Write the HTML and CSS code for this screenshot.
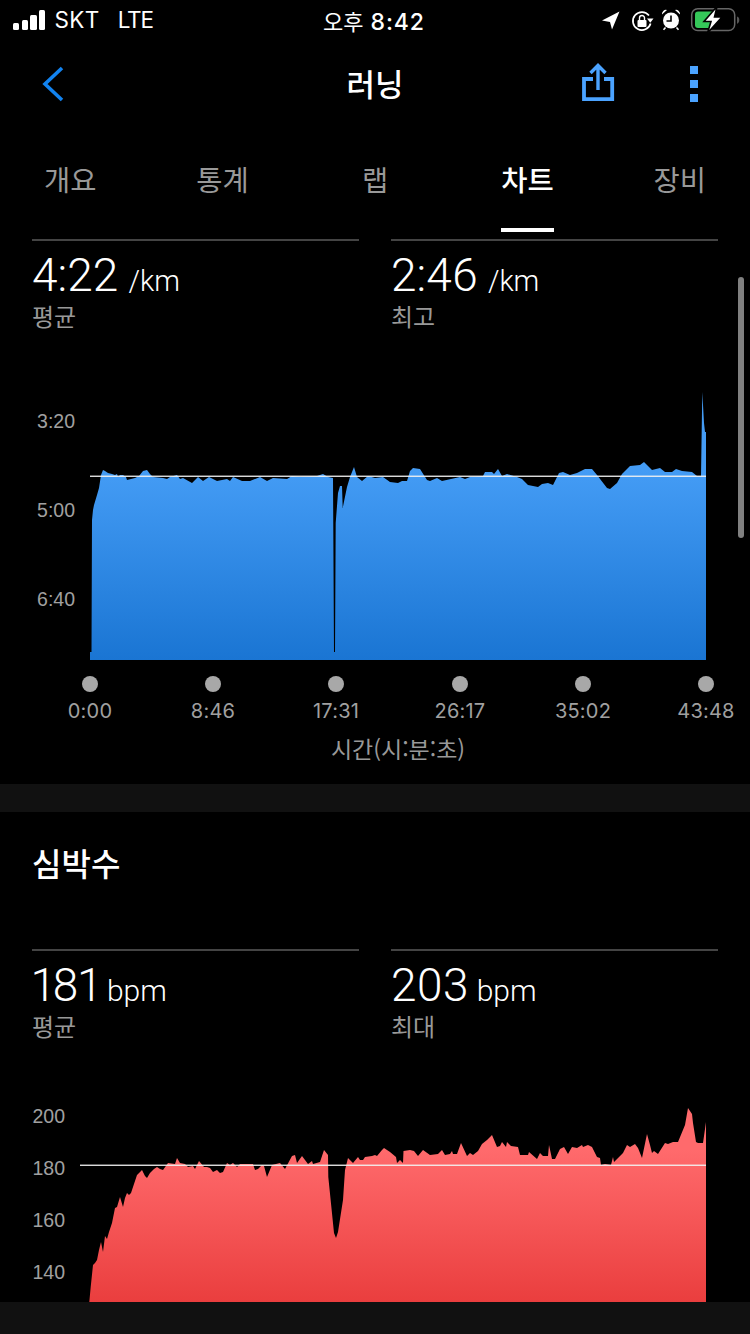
FILE: index.html
```html
<!DOCTYPE html>
<html lang="ko">
<head>
<meta charset="utf-8">
<title>러닝</title>
<link rel="stylesheet" href="styles.css">
</head>
<body>
<div class="page">
  <header class="status">
    <div class="status-left">
      <div class="signal"><i class="b1"></i><i class="b2"></i><i class="b3"></i><i class="b4"></i></div>
      <span class="carrier">SKT</span>
      <span class="carrier net">LTE</span>
    </div>
    <div class="clock"><span class="clock-ko">오후</span> 8:42</div>
    <svg class="status-icons" width="150" height="40" viewBox="600 0 150 40">
      <path d="M602 20.5 619.5 11.5 612 29.5 610 22Z" fill="#fff"/>
      <path d="M650.6 23.5A9 9 0 1 1 649 15.5" fill="none" stroke="#fff" stroke-width="1.7"/>
      <path d="M647 18.5h6.5l-3.2 4.2Z" fill="#fff"/>
      <rect x="637.5" y="20" width="9" height="7" rx="1" fill="#fff"/>
      <path d="M639.5 20v-2a2.5 2.5 0 0 1 5 0v2" fill="none" stroke="#fff" stroke-width="1.4"/>
      <circle cx="671" cy="20.5" r="8" fill="#fff"/>
      <path d="M671 15.5v5.5h-4.5" fill="none" stroke="#000" stroke-width="1.6"/>
      <path d="M662 14.5a4 4 0 0 1 5-4.5ZM680 14.5a4 4 0 0 0-5-4.5Z" fill="#fff"/>
      <path d="M665.5 27.5l-2 2.2M676.5 27.5l2 2.2" stroke="#fff" stroke-width="1.6"/>
      <rect x="691.7" y="8.7" width="43" height="21.8" rx="6" fill="none" stroke="#666" stroke-width="1.5"/>
      <path d="M698 11.5h15v16.5h-15a3 3 0 0 1-3-3V14.5a3 3 0 0 1 3-3Z" fill="#35c759"/>
      <path d="M737 16.5c1.6.4 2.3 1.7 2.3 3.6s-.7 3.2-2.3 3.6Z" fill="#555"/>
      <path d="M717 6.5 704 21.5h7L707.5 33 722 17h-7.5Z" fill="#fff" stroke="#000" stroke-width="1.6"/>
    </svg>
  </header>

  <nav class="nav">
    <svg class="nav-back" width="40" height="60" viewBox="30 54 40 60"><path d="M62 68 45 84 62 100" fill="none" stroke="#1283f0" stroke-width="3.6"/></svg>
    <h1 class="nav-title">러닝</h1>
    <div class="nav-actions">
      <svg width="40" height="52" viewBox="578 56 40 52">
        <path d="M593 79H584V99.2H612.2V79H604" fill="none" stroke="#4ba3ff" stroke-width="3.8"/>
        <path d="M598 90V65.5M590.5 73 598 65.5 605.5 73" fill="none" stroke="#4ba3ff" stroke-width="3.4"/>
      </svg>
      <div class="dots"><i></i><i></i><i></i></div>
    </div>
  </nav>

  <div class="tabs">
    <div class="tab"><span>개요</span></div>
    <div class="tab"><span>통계</span></div>
    <div class="tab"><span>랩</span></div>
    <div class="tab active"><span>차트</span></div>
    <div class="tab"><span>장비</span></div>
  </div>

  <section class="stats first">
    <div class="stat">
      <div class="value">4:22 <small class="km">/km</small></div>
      <div class="label">평균</div>
    </div>
    <div class="stat">
      <div class="value">2:46 <small class="km">/km</small></div>
      <div class="label">최고</div>
    </div>
  </section>

  <svg class="chart pace" width="750" height="444" viewBox="0 340 750 444">
    <defs>
      <linearGradient id="blue" gradientUnits="userSpaceOnUse" x1="0" y1="470" x2="0" y2="660">
        <stop offset="0" stop-color="#449cf5"/><stop offset="1" stop-color="#1a75d3"/>
      </linearGradient>
      <linearGradient id="red" gradientUnits="userSpaceOnUse" x1="0" y1="1150" x2="0" y2="1302">
        <stop offset="0" stop-color="#ff6a6c"/><stop offset="1" stop-color="#ea3e3e"/>
      </linearGradient>
    </defs>
    <text class="axis" x="75" y="428" text-anchor="end">3:20</text>
    <text class="axis" x="75" y="517" text-anchor="end">5:00</text>
    <text class="axis" x="75" y="606" text-anchor="end">6:40</text>
    <path fill="url(#blue)" d="M90 660V652H91.5L92 520 93 510 94 505 97 495 99 488 101 475 103 470 105 471 108 473 112 474 115 475 117 474 118 477 120 475 123 475 126 477 127 480 131 479 135 478 139 476 143 471 147 470 150 474 153 477 163 478 167 479 170 477 177 475 180 479 183 478 192 483 198 477 203 481 209 477 217 481 227 479 230 481 233 477 242 481 250 481 260 477 267 481 273 478 287 479 292 476 300 477 317 476 323 474 328 477 333 478 334 652H335L335.7 523 338 493 340 486 342 486 342.7 508 347 487 350 477 354 467 357 477 362 481 368 476 375 478 383 477 390 482 398 483 402 481 407 481 410 471 413 468 420 469 427 480 430 481 437 478 442 481 460 477 465 479 470 477 483 476 485 472 492 472 494 474 498 469 502 476 507 474 517 477 522 479 528 485 538 487 542 484 548 483 553 485 559 473 563 472 570 475 577 473 585 469 592 469 597 475 607 488 610 489 617 483 622 474 630 466 640 465 644 462 652 470 660 468 665 472 672 472 676 469 682 471 692 472 697 476 701 476 702.3 392 704 423 705 432H706V660Z"/>
    <rect class="avg" x="90" y="475.6" width="616" height="1.3"/>
    <g class="ticks">
      <circle cx="90" cy="684" r="8"/><circle cx="213" cy="684" r="8"/><circle cx="336" cy="684" r="8"/><circle cx="460" cy="684" r="8"/><circle cx="583" cy="684" r="8"/><circle cx="706" cy="684" r="8"/>
    </g>
    <g class="xlabels">
      <text x="90" y="718">0:00</text><text x="213" y="718">8:46</text><text x="336" y="718">17:31</text><text x="460" y="718">26:17</text><text x="583" y="718">35:02</text><text x="706" y="718">43:48</text>
    </g>
    <text class="xtitle" x="398" y="758">시간(시:분:초)</text>
  </svg>

  <div class="band"></div>

  <section class="heart">
    <h2 class="heading">심박수</h2>
    <div class="stats">
      <div class="stat">
        <div class="value">181 <small class="bpm">bpm</small></div>
        <div class="label">평균</div>
      </div>
      <div class="stat">
        <div class="value">203 <small class="bpm">bpm</small></div>
        <div class="label">최대</div>
      </div>
    </div>
  </section>

  <svg class="chart hr" width="750" height="252" viewBox="0 1050 750 252">
    <text class="axis" x="65" y="1123" text-anchor="end">200</text>
    <text class="axis" x="65" y="1175" text-anchor="end">180</text>
    <text class="axis" x="65" y="1227" text-anchor="end">160</text>
    <text class="axis" x="65" y="1279" text-anchor="end">140</text>
    <path fill="url(#red)" d="M89.3 1302 90.7 1287 93 1265 95 1263 97 1260 99 1250 101 1242 103 1252 105 1236 107 1239 109 1232 112 1223 115 1208 117 1207 120 1197 123 1207 125 1198 127 1193 129 1195 131 1193 134 1184 137 1175 142 1170 145 1176 147 1178 150 1173 154 1169 157 1167 160 1169 163 1170 168 1163 175 1164 177 1158 180 1163 185 1164 188 1167 193 1166 195 1169 199 1161 204 1167 207 1167 210 1168 213 1172 217 1170 220 1173 223 1172 227 1163 230 1165 233 1163 237 1167 240 1164 253 1164 255 1170 258 1169 262 1165 264 1166 267 1177 272 1165 280 1163 285 1169 292 1156 295 1155 297 1163 302 1156 308 1164 312 1161 313 1164 320 1162 324 1150 328 1155 328.3 1177 334 1233 336 1238 338 1232 343 1200 345 1170 348 1158 353 1163 358 1157 360 1160 363 1160 365 1157 372 1156 375 1155 377 1156 382 1150 384 1148 390 1152 396 1157 397 1163 400 1160 403 1163 403.5 1151 410 1150 414 1151 418 1156 423 1150 430 1155 438 1154 442 1150 445 1155 450 1154 452 1151 453 1154 457 1154 461 1143 467 1156 470 1153 473 1155 478 1151 482 1144 487 1140 492 1135 497 1147 500 1146 502 1142 506 1147 507 1142 511 1146 518 1147 520 1155 528 1155 529 1152 537 1159 540 1153 543 1156 548 1156 549 1145 552 1159 555 1159 560 1149 564 1147 568 1154 572 1147 577 1148 582 1145 583 1147 588 1145 592 1147 597 1157 600 1158 601 1165 605 1164 611 1165 613 1157 614 1162 623 1153 627 1145 630 1147 635 1144 638 1148 642 1158 647 1134 650 1145 652 1153 654 1151 658 1154 665 1143 668 1144 673 1142 675 1142 678 1142 685 1125 688 1108 692 1114 693 1123 696 1142 698 1143 703 1143 706 1122V1302Z"/>
    <rect class="avg" x="80" y="1164.6" width="626" height="1.3"/>
  </svg>

  <div class="foot"></div>
  <div class="scrollbar"></div>
</div>
</body>
</html>
```

FILE: styles.css
```css
* { box-sizing: border-box; }
html, body { margin: 0; background: #000; }
body {
  font-family: "Noto Sans CJK KR", "Liberation Sans", sans-serif;
  color: #fff;
}
.page {
  position: relative;
  width: 750px;
  height: 1334px;
  overflow: hidden;
  background: #000;
}

/* status bar */
.status {
  position: relative;
  height: 40px;
  display: flex;
  align-items: center;
  justify-content: space-between;
  padding-left: 13px;
}
.status-left { display: flex; align-items: center; }
.signal { display: flex; align-items: flex-end; gap: 2.3px; height: 20px; margin-right: 9px; }
.signal i { display: block; width: 6.4px; background: #fff; border-radius: 1.5px; }
.signal .b1 { height: 7px; }
.signal .b2 { height: 10px; }
.signal .b3 { height: 15px; }
.signal .b4 { height: 20px; }
.carrier { font: 400 22.5px/40px Inter, "Liberation Sans", sans-serif; letter-spacing: .4px; }
.net { margin-left: 18px; letter-spacing: -1.2px; }
.clock {
  position: absolute;
  left: 323px;
  top: 0;
  font: 500 23px/40px Inter, "Noto Sans CJK KR", sans-serif;
  letter-spacing: .9px;
}
.clock-ko { font-family: "Noto Sans CJK KR", sans-serif; font-size: 22px; font-weight: 400; letter-spacing: 0; }
.status-icons { display: block; }

/* nav */
.nav {
  position: relative;
  height: 88px;
  display: flex;
  align-items: center;
  justify-content: center;
}
.nav-back { position: absolute; left: 30px; top: 14px; }
.nav-title { margin: -2px 0 0; font-size: 31px; font-weight: 500; line-height: 86px; }
.nav-actions {
  position: absolute;
  left: 578px;
  top: 16px;
  display: flex;
  gap: 72px;
  align-items: flex-start;
}
.nav-actions svg { display: block; flex: none; margin-right: -40px; }
.dots { display: flex; flex-direction: column; gap: 6.5px; margin-top: 10px; margin-left: 40px; }
.dots i { display: block; width: 8px; height: 7.5px; background: #4ba3ff; }

/* tabs */
.tabs {
  display: grid;
  grid-template-columns: repeat(5, 1fr);
  width: 762px;
  margin: 0 -6px;
  padding-top: 31px;
}
.tab { text-align: center; color: #999; font-size: 28.5px; }
.tab span {
  display: inline-block;
  line-height: 40px;
  padding-bottom: 29px;
  border-bottom: 4px solid transparent;
  vertical-align: top;
}
.tab.active { color: #fff; font-weight: 500; }
.tab.active span { border-bottom-color: #fff; }

/* stats */
.stats {
  display: grid;
  grid-template-columns: 327px 327px;
  gap: 32px;
  padding: 0 32px;
  height: 101px;
}
.stats.first { margin-top: 7px; }
.stat { border-top: 2px solid #444; }
.value {
  font: 300 46px/44px Roboto, "Liberation Sans", sans-serif;
  font-variant-numeric: proportional-nums;
  margin-top: 12px;
  white-space: nowrap;
}
.value small { font-size: 30px; font-weight: 300; }
.value .km { font-size: 29px; margin-left: -1px; }
.value .bpm { margin-left: -3px; }
.label { font-size: 24px; line-height: 26px; color: #999; }

/* charts */
.chart { display: block; }
.axis, .xlabels text {
  font: 400 19.5px "Liberation Sans", sans-serif;
  fill: #a0a0a0;
}
.xlabels text { font-family: Inter, "Liberation Sans", sans-serif; font-size: 20px; letter-spacing: .2px; text-anchor: middle; }
.xtitle {
  font: 400 23px "Noto Sans CJK KR", sans-serif;
  fill: #999;
  text-anchor: middle;
}
.avg { fill: #f2f2f2; }
.ticks circle { fill: #a8a8a8; }

.band { height: 28px; background: #111; }
.foot { height: 32px; background: #111; }

/* heart section */
.heart { display: block; }
.heading {
  margin: 0;
  padding: 30px 32px 67px;
  font-size: 32px;
  font-weight: 500;
  line-height: 40px;
}

.scrollbar {
  position: absolute;
  left: 738px;
  top: 277px;
  width: 6px;
  height: 261px;
  border-radius: 3px;
  background: #808080;
}
```
